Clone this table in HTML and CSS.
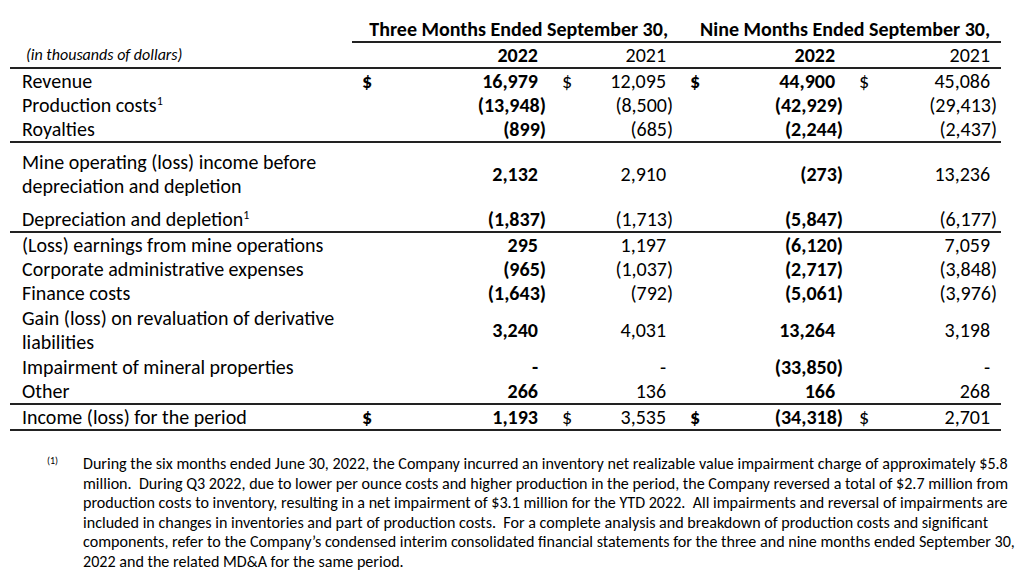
FILE: index.html
```html
<!DOCTYPE html>
<html lang="en">
<head>
<meta charset="utf-8">
<title>Results</title>
<link rel="stylesheet" href="styles.css">
</head>
<body>
<main class="page">
  <table class="fin">
    <colgroup>
      <col class="c-label"><col class="c-d1"><col class="c-v1"><col class="c-d2"><col class="c-v2"><col class="c-d3"><col class="c-v3"><col class="c-d4"><col class="c-v4">
    </colgroup>
    <thead>
      <tr class="h1">
        <th class="blank"></th>
        <th class="period p3" colspan="4">Three Months Ended September 30,</th>
        <th class="period p9" colspan="4">Nine Months Ended September 30,</th>
      </tr>
      <tr class="h2 rule">
        <th class="units">(in thousands of dollars)</th>
        <th></th>
        <th class="n v1 pos b">2022</th>
        <th></th>
        <th class="n v2 pos">2021</th>
        <th></th>
        <th class="n v3 pos b">2022</th>
        <th></th>
        <th class="n v4 pos">2021</th>
      </tr>
    </thead>
    <tbody>
      <tr>
        <td class="lbl">Revenue</td>
        <td class="d d1 b">$</td><td class="n v1 pos b">16,979</td>
        <td class="d d2">$</td><td class="n v2 pos">12,095</td>
        <td class="d d3 b">$</td><td class="n v3 pos b">44,900</td>
        <td class="d d4">$</td><td class="n v4 pos">45,086</td>
      </tr>
      <tr>
        <td class="lbl">Production costs<sup>1</sup></td>
        <td></td><td class="n v1 b">(13,948)</td>
        <td></td><td class="n v2">(8,500)</td>
        <td></td><td class="n v3 b">(42,929)</td>
        <td></td><td class="n v4">(29,413)</td>
      </tr>
      <tr class="rule">
        <td class="lbl">Royalties</td>
        <td></td><td class="n v1 b">(899)</td>
        <td></td><td class="n v2">(685)</td>
        <td></td><td class="n v3 b">(2,244)</td>
        <td></td><td class="n v4">(2,437)</td>
      </tr>
      <tr class="tall">
        <td class="lbl">Mine operating (loss) income before<br>depreciation and depletion</td>
        <td></td><td class="n v1 pos b">2,132</td>
        <td></td><td class="n v2 pos">2,910</td>
        <td></td><td class="n v3 b">(273)</td>
        <td></td><td class="n v4 pos">13,236</td>
      </tr>
      <tr class="rule">
        <td class="lbl">Depreciation and depletion<sup>1</sup></td>
        <td></td><td class="n v1 b">(1,837)</td>
        <td></td><td class="n v2">(1,713)</td>
        <td></td><td class="n v3 b">(5,847)</td>
        <td></td><td class="n v4">(6,177)</td>
      </tr>
      <tr>
        <td class="lbl">(Loss) earnings from mine operations</td>
        <td></td><td class="n v1 pos b">295</td>
        <td></td><td class="n v2 pos">1,197</td>
        <td></td><td class="n v3 b">(6,120)</td>
        <td></td><td class="n v4 pos">7,059</td>
      </tr>
      <tr>
        <td class="lbl">Corporate administrative expenses</td>
        <td></td><td class="n v1 b">(965)</td>
        <td></td><td class="n v2">(1,037)</td>
        <td></td><td class="n v3 b">(2,717)</td>
        <td></td><td class="n v4">(3,848)</td>
      </tr>
      <tr>
        <td class="lbl">Finance costs</td>
        <td></td><td class="n v1 b">(1,643)</td>
        <td></td><td class="n v2">(792)</td>
        <td></td><td class="n v3 b">(5,061)</td>
        <td></td><td class="n v4">(3,976)</td>
      </tr>
      <tr class="mid">
        <td class="lbl">Gain (loss) on revaluation of derivative<br>liabilities</td>
        <td></td><td class="n v1 pos b">3,240</td>
        <td></td><td class="n v2 pos">4,031</td>
        <td></td><td class="n v3 pos b">13,264</td>
        <td></td><td class="n v4 pos">3,198</td>
      </tr>
      <tr>
        <td class="lbl">Impairment of mineral properties</td>
        <td></td><td class="n v1 pos b">-</td>
        <td></td><td class="n v2 pos">-</td>
        <td></td><td class="n v3 b">(33,850)</td>
        <td></td><td class="n v4 pos">-</td>
      </tr>
      <tr class="rule">
        <td class="lbl">Other</td>
        <td></td><td class="n v1 pos b">266</td>
        <td></td><td class="n v2 pos">136</td>
        <td></td><td class="n v3 pos b">166</td>
        <td></td><td class="n v4 pos">268</td>
      </tr>
      <tr class="rule">
        <td class="lbl">Income (loss) for the period</td>
        <td class="d d1 b">$</td><td class="n v1 pos b">1,193</td>
        <td class="d d2">$</td><td class="n v2 pos">3,535</td>
        <td class="d d3 b">$</td><td class="n v3 b">(34,318)</td>
        <td class="d d4">$</td><td class="n v4 pos">2,701</td>
      </tr>
    </tbody>
  </table>

  <section class="note">
    <span class="mark">(1)</span>
    <p class="note-text">
      <span class="ln">During the six months ended June 30, 2022, the Company incurred an inventory net realizable value impairment charge of approximately $5.8</span>
      <span class="ln">million.&nbsp; During Q3 2022, due to lower per ounce costs and higher production in the period, the Company reversed a total of $2.7 million from</span>
      <span class="ln">production costs to inventory, resulting in a net impairment of $3.1 million for the YTD 2022.&nbsp; All impairments and reversal of impairments are</span>
      <span class="ln">included in changes in inventories and part of production costs.&nbsp; For a complete analysis and breakdown of production costs and significant</span>
      <span class="ln">components, refer to the Company’s condensed interim consolidated financial statements for the three and nine months ended September 30,</span>
      <span class="ln">2022 and the related MD&amp;A for the same period.</span>
    </p>
  </section>
</main>
</body>
</html>
```

FILE: styles.css
```css
html, body {
  margin: 0;
  padding: 0;
  background: #ffffff;
}

body {
  font-family: "Carlito", "Lato", sans-serif;
  color: #000000;
}

.page {
  padding: 17px 0 0 10px;
  width: 1013px;
}

.fin {
  border-collapse: separate;
  border-spacing: 0;
  table-layout: fixed;
  width: 991px;
  font-size: 20px;
  line-height: 24px;
}

.c-label { width: 342px; }
.c-d1 { width: 48px; }
.c-v1 { width: 150px; }
.c-d2 { width: 40px; }
.c-v2 { width: 86px; }
.c-d3 { width: 34px; }
.c-v3 { width: 138px; }
.c-d4 { width: 32px; }
.c-v4 { width: 121px; }

.fin th,
.fin td {
  padding: 0;
  font-weight: 400;
  white-space: nowrap;
  vertical-align: middle;
}

.fin .b { font-weight: 700; }

.h1 .period {
  font-weight: 700;
  text-align: right;
  border-bottom: 2px solid #222;
}
.h1 .p3 { padding-right: 8px; }
.h1 .p9 { padding-right: 11px; }

.units {
  font-style: italic;
  text-align: left;
  padding-left: 16px !important;
  font-size: 16px;
}

.rule > th,
.rule > td {
  border-bottom: 2px solid #222;
}

.lbl {
  padding-left: 12px !important;
  text-align: left;
}

.lbl sup {
  font-size: 12px;
  line-height: 0;
  vertical-align: 7px;
}

.d { text-align: left; }
.d1 { padding-left: 10px !important; }
.d2 { padding-left: 12px !important; }
.d3 { padding-left: 14px !important; }
.d4 { padding-left: 11px !important; }

.n { text-align: right; }
.v1 { padding-right: 4px !important; }
.v2 { padding-right: 3px !important; }
.v3 { padding-right: 5px !important; }
.v4 { padding-right: 4px !important; }
.v1.pos { padding-right: 12px !important; }
.v2.pos { padding-right: 10px !important; }
.v3.pos { padding-right: 13px !important; }
.v4.pos { padding-right: 11px !important; }

.tall > td { padding-top: 7px; padding-bottom: 9px; }
.mid > td { padding-top: 1px; padding-bottom: 1px; }

.note {
  display: flex;
  margin-top: 23px;
  padding-left: 37px;
}

.mark {
  width: 36px;
  flex: none;
  font-size: 10px;
  line-height: 14px;
}

.note-text {
  margin: 0;
  font-size: 16.1px;
  line-height: 19.5px;
}

.ln {
  display: block;
  white-space: nowrap;
}
```
